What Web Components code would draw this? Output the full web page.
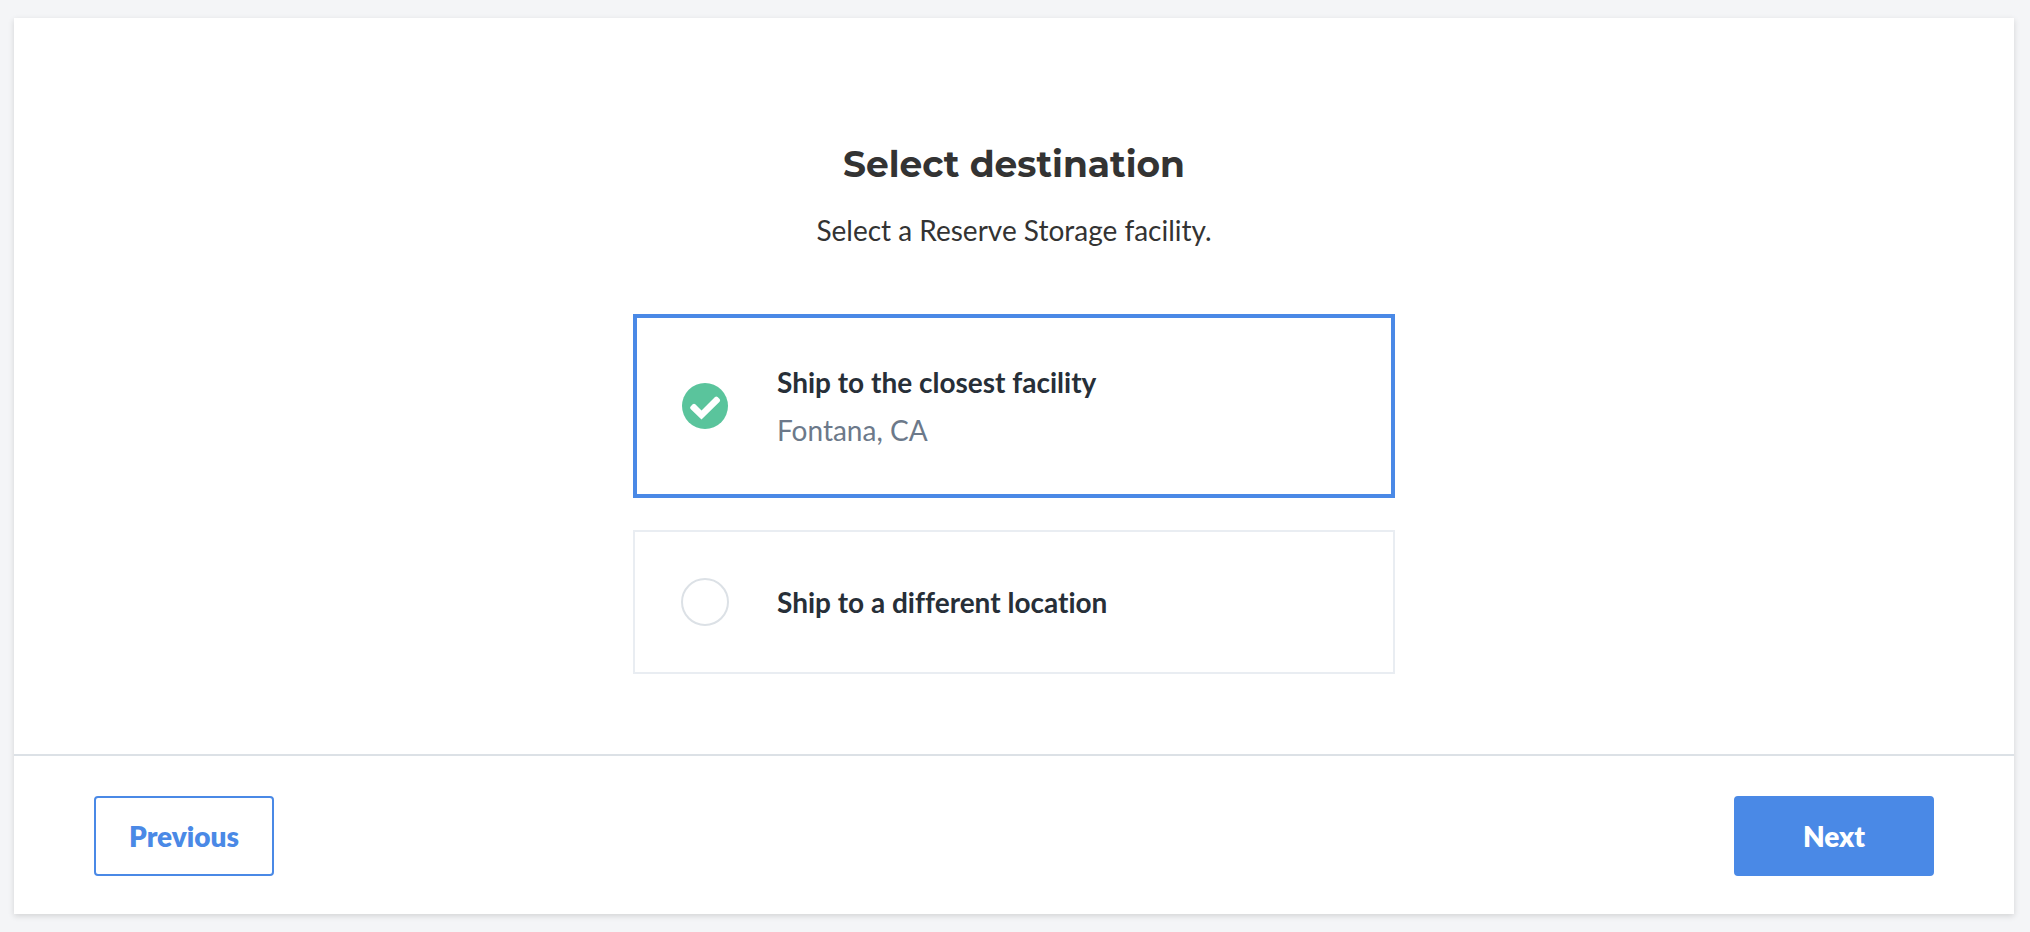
<!DOCTYPE html>
<html lang="en">
<head>
<meta charset="utf-8">
<meta name="viewport" content="width=device-width, initial-scale=1">
<title>Select destination</title>
<style>
  body {
    margin: 0;
    background: #f4f5f7;
    color: #333;
    font: 28px/48px Lato, "Liberation Sans", sans-serif;
    font-variant-ligatures: none;
  }
</style>
</head>
<body>
<wizard-panel>
  <step-heading>
    <span slot="title">Select destination</span>
    <span slot="hint">Select a Reserve Storage facility.</span>
  </step-heading>
  <destination-options></destination-options>
  <action-button slot="actions" variant="outline">Previous</action-button>
  <action-button slot="actions" variant="primary">Next</action-button>
</wizard-panel>

<script>
const define = (name, markup) => {
  const template = document.createElement('template');
  template.innerHTML = markup;
  customElements.define(name, class extends HTMLElement {
    constructor() {
      super();
      this.attachShadow({ mode: 'open' }).append(template.content.cloneNode(true));
    }
  });
};

define('wizard-panel', `
  <style>
    :host { display: block; padding: 18px 16px 18px 14px; }
    section { background: #fff; box-shadow: 0 2px 6px rgba(0, 0, 0, .14); }
    main { display: flex; flex-direction: column; align-items: center; padding: 120px 24px 80px; }
    footer {
      display: flex; justify-content: space-between;
      padding: 40px 80px 38px; border-top: 2px solid #dce1e6;
    }
  </style>
  <section>
    <main><slot></slot></main>
    <footer><slot name="actions"></slot></footer>
  </section>`);

define('step-heading', `
  <style>
    :host { display: block; text-align: center; }
    h1 { margin: 0; font: 700 36px/52px Montserrat, Inter, sans-serif; }
    p { margin: 16px 0 60px; }
  </style>
  <h1><slot name="title"></slot></h1>
  <p><slot name="hint"></slot></p>`);

define('check-icon', `
  <style>
    :host { display: block; width: 46px; height: 46px; }
    svg { display: block; width: 100%; height: 100%; }
  </style>
  <svg viewBox="0 0 46 46" aria-hidden="true">
    <circle cx="23" cy="23" r="23" fill="#5ac49c"/>
    <path d="M8.6 23.4 L10.7 21.3 Q12 20.2 13.3 21.3 L19.5 27.5 L33 14.1 Q34.3 13 35.6 14.1 L37.6 16.1 Q38.7 17.4 37.6 18.7 L19.5 36.6 L8.6 26 Q7.5 24.7 8.6 23.4 Z" fill="#fff"/>
  </svg>`);

define('destination-options', `
  <style>
    :host { display: block; width: 100%; max-width: 762px; }
    fieldset { display: grid; gap: 32px; margin: 0; padding: 0; border: 0; min-width: 0; }
    label {
      display: flex; align-items: center; gap: 48px;
      padding: 46px; border: 2px solid #e9edf2;
      color: #272f38; cursor: pointer;
    }
    label:has(input:checked) { padding: 40px 44px; border: 4px solid #4a89e6; }
    .mark { display: grid; place-items: center; width: 48px; height: 48px; }
    .mark > * { grid-area: 1 / 1; }
    input {
      appearance: none; box-sizing: border-box; width: 48px; height: 48px; margin: 0;
      border: 2px solid #dce1e6; border-radius: 50%; cursor: pointer;
    }
    input:checked { border-color: transparent; }
    check-icon { visibility: hidden; pointer-events: none; }
    input:checked + check-icon { visibility: visible; }
    strong, small { display: block; font-size: 28px; }
    strong { font-weight: 700; }
    small { color: #6c798a; }
  </style>
  <fieldset aria-label="Destination">
    <label>
      <span class="mark"><input type="radio" name="destination" value="closest" checked><check-icon></check-icon></span>
      <span><strong>Ship to the closest facility</strong><small>Fontana, CA</small></span>
    </label>
    <label>
      <span class="mark"><input type="radio" name="destination" value="different"><check-icon></check-icon></span>
      <span><strong>Ship to a different location</strong></span>
    </label>
  </fieldset>`);

define('action-button', `
  <style>
    :host { display: block; }
    button {
      box-sizing: border-box; min-width: 180px; height: 80px; padding: 0 32px;
      border: 2px solid #4a89e6; border-radius: 4px;
      background: #fff; color: #4a89e6;
      font: inherit; font-weight: 800; font-variant-ligatures: none; cursor: pointer;
    }
    :host([variant="primary"]) button { min-width: 200px; background: #4a89e6; color: #fff; }
  </style>
  <button type="button"><slot></slot></button>`);
</script>
</body>
</html>
